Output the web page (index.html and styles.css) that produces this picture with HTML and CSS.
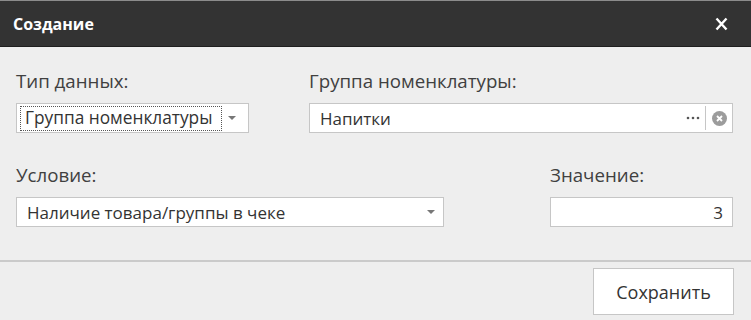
FILE: index.html
```html
<!DOCTYPE html>
<html lang="ru">
<head>
  <meta charset="utf-8">
  <title>Создание</title>
  <link rel="stylesheet" href="styles.css">
</head>
<body>
  <div class="dialog">
    <div class="title-bar">
      <span class="title">Создание</span>
      <span class="close">
        <svg width="15" height="14" viewBox="0 0 15 14"><path d="M2.5 1.5 L12.5 12.5 M12.5 1.5 L2.5 12.5" stroke="#fff" stroke-width="2.4"/></svg>
      </span>
    </div>

    <div class="form">
      <div class="row row-top">
        <div class="field field-type">
          <label class="label">Тип данных:</label>
          <div class="box select">
            <span class="focus-text">Группа номенклатуры</span>
            <span class="arrow"></span>
          </div>
        </div>
        <div class="field field-group">
          <label class="label">Группа номенклатуры:</label>
          <div class="box">
            <span class="value">Напитки</span>
            <svg class="dots" width="14" height="4" viewBox="0 0 14 4"><circle cx="2" cy="2" r="1.3" fill="#555"/><circle cx="7" cy="2" r="1.3" fill="#555"/><circle cx="12" cy="2" r="1.3" fill="#555"/></svg>
            <span class="sep"></span>
            <span class="clear">
              <svg width="15" height="15" viewBox="0 0 15 15"><circle cx="7.5" cy="7.5" r="7.5" fill="#9c9c9c"/><path d="M5 5 L10 10 M10 5 L5 10" stroke="#fff" stroke-width="1.8"/></svg>
            </span>
          </div>
        </div>
      </div>

      <div class="row row-bottom">
        <div class="field field-cond">
          <label class="label">Условие:</label>
          <div class="box select">
            <span class="value">Наличие товара/группы в чеке</span>
            <span class="arrow"></span>
          </div>
        </div>
        <div class="field field-val">
          <label class="label">Значение:</label>
          <div class="box number">
            <span class="value">3</span>
          </div>
        </div>
      </div>
    </div>

    <div class="footer">
      <button class="save">Сохранить</button>
    </div>
  </div>
</body>
</html>
```

FILE: styles.css
```css
body{
    margin: 0;
    background-color: #eeeeee;
    font-family: "Open Sans", "Noto Sans", sans-serif;
    color: #404040;
}
.dialog{
    width: 751px;
    height: 320px;
    overflow: hidden;
}
.title-bar{
    height: 45px;
    background-color: #333333;
    border-top: 1px solid #8c8c8c;
    border-bottom: 1px solid #1f1f1f;
    display: flex;
    align-items: center;
    justify-content: space-between;
    padding: 0 22px 0 13px;
}
.title{
    color: #ffffff;
    font-weight: bold;
    font-size: 16px;
}
.close{
    display: flex;
}
.form{
    padding: 22px 18px 0 16px;
}
.row{
    display: flex;
    justify-content: space-between;
}
.row-bottom{
    margin-top: 30px;
}
.label{
    display: block;
    font-size: 18.7px;
    line-height: 24px;
    margin-bottom: 10px;
}
.field-type{ width: 233px; }
.field-group{ width: 424px; }
.field-cond{ width: 428px; }
.field-val{ width: 183px; }
.box{
    height: 28px;
    background-color: #ffffff;
    border: 1px solid #c6c6c6;
    display: flex;
    align-items: center;
    padding: 0 5px 0 10px;
    font-size: 17px;
    color: #333;
    white-space: nowrap;
}
.value{
    flex: 1;
}
.select .arrow{
    width: 0;
    height: 0;
    border-left: 4px solid transparent;
    border-right: 4px solid transparent;
    border-top: 4px solid #777;
    margin: 0 4px 0 auto;
}
.field-cond .arrow{
    margin-right: 3px;
}
.field-type .box{
    padding-left: 3px;
    padding-right: 8px;
}
.focus-text{
    box-sizing: border-box;
    width: 202px;
    height: 25px;
    border: 1px dotted #555;
    padding: 0 4px;
    line-height: 22px;
    overflow: hidden;
    font-size: 17.3px;
}
.dots{
    display: block;
    margin-left: 6px;
}
.sep{
    width: 1px;
    height: 24px;
    background-color: #c6c6c6;
    margin: 0 6px 0 5px;
}
.clear{
    display: flex;
}
.number{
    padding-right: 9px;
}
.number .value{
    text-align: right;
}
.footer{
    margin-top: 33px;
    border-top: 2px solid #cacaca;
    padding: 6px 17px 0 0;
    display: flex;
    justify-content: flex-end;
}
.save{
    width: 141px;
    height: 47px;
    background-color: #ffffff;
    border: 1px solid #c6c6c6;
    font-family: "Open Sans", sans-serif;
    font-size: 18px;
    color: #333;
}
```
